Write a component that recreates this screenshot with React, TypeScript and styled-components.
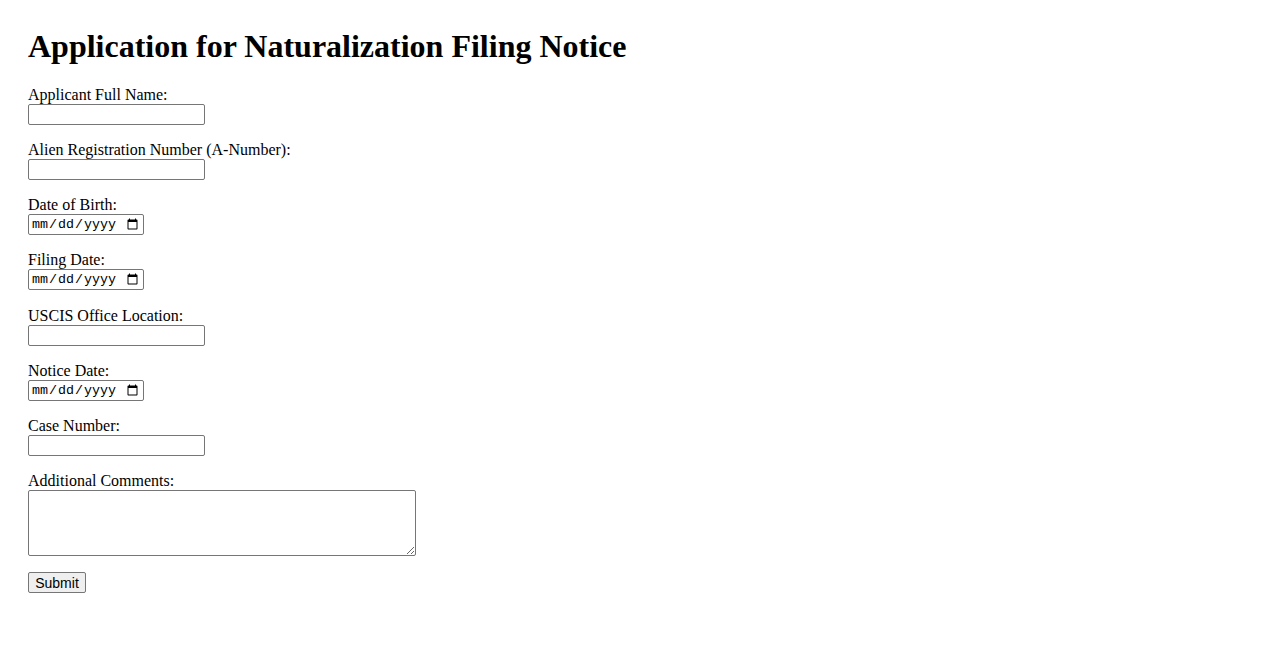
import React from "react"
import styled, { createGlobalStyle } from "styled-components"

const GlobalStyle = createGlobalStyle`
    body {
        margin: 8px;
        background: #fff;
        color: #000;
        font-family: "Liberation Serif", "Times New Roman", serif;
        font-size: 16px;
    }
`
const Page = styled.div`
    padding: 20px;
`
const Heading = styled.h1`
    font-size: 32px;
    font-weight: bold;
    margin: 0 0 21px 0;
`
const Field = styled.div`
    margin-bottom: 16.15px;
`
const Label = styled.label`
    display: block;
    line-height: 18px;
`
const TextInput = styled.input`
    display: block;
    box-sizing: border-box;
    width: 177px;
    height: 21px;
    margin: 0;
    font-family: "Liberation Sans", Arial, sans-serif;
    font-size: 13.33px;
    border: 1px solid #767676;
    border-radius: 2px;
    padding: 1px 2px;
`
const DateInput = styled.input`
    display: block;
    box-sizing: border-box;
    width: 116px;
    height: 21px;
    margin: 0;
    font-family: "Liberation Mono", "Courier New", monospace;
    font-size: 13.33px;
    border: 1px solid #767676;
    border-radius: 2px;
    padding: 1px 2px;
`
const TextArea = styled.textarea`
    display: block;
    box-sizing: border-box;
    width: 388px;
    height: 66px;
    margin: 0;
    border: 1px solid #767676;
    border-radius: 2px;
    font-family: "Liberation Mono", monospace;
    font-size: 13.33px;
`
const Button = styled.button`
    box-sizing: border-box;
    width: 58px;
    height: 21px;
    padding: 0 6px;
    font-family: "Liberation Sans", Arial, sans-serif;
    font-size: 14px;
    color: #000;
    background: #efefef;
    border: 1px solid #767676;
    border-radius: 2px;
`

const App = () => {
    return (
        <Page>
            <GlobalStyle />
            <Heading>Application for Naturalization Filing Notice</Heading>
            <form onSubmit={e => e.preventDefault()}>
                <Field>
                    <Label htmlFor="name">Applicant Full Name:</Label>
                    <TextInput id="name" type="text" />
                </Field>
                <Field>
                    <Label htmlFor="anum">Alien Registration Number (A-Number):</Label>
                    <TextInput id="anum" type="text" />
                </Field>
                <Field>
                    <Label htmlFor="dob">Date of Birth:</Label>
                    <DateInput id="dob" type="date" />
                </Field>
                <Field>
                    <Label htmlFor="filing">Filing Date:</Label>
                    <DateInput id="filing" type="date" />
                </Field>
                <Field>
                    <Label htmlFor="office">USCIS Office Location:</Label>
                    <TextInput id="office" type="text" />
                </Field>
                <Field>
                    <Label htmlFor="notice">Notice Date:</Label>
                    <DateInput id="notice" type="date" />
                </Field>
                <Field>
                    <Label htmlFor="case">Case Number:</Label>
                    <TextInput id="case" type="text" />
                </Field>
                <Field>
                    <Label htmlFor="comments">Additional Comments:</Label>
                    <TextArea id="comments" />
                </Field>
                <Button type="submit">Submit</Button>
            </form>
        </Page>
    )
}

export default App
